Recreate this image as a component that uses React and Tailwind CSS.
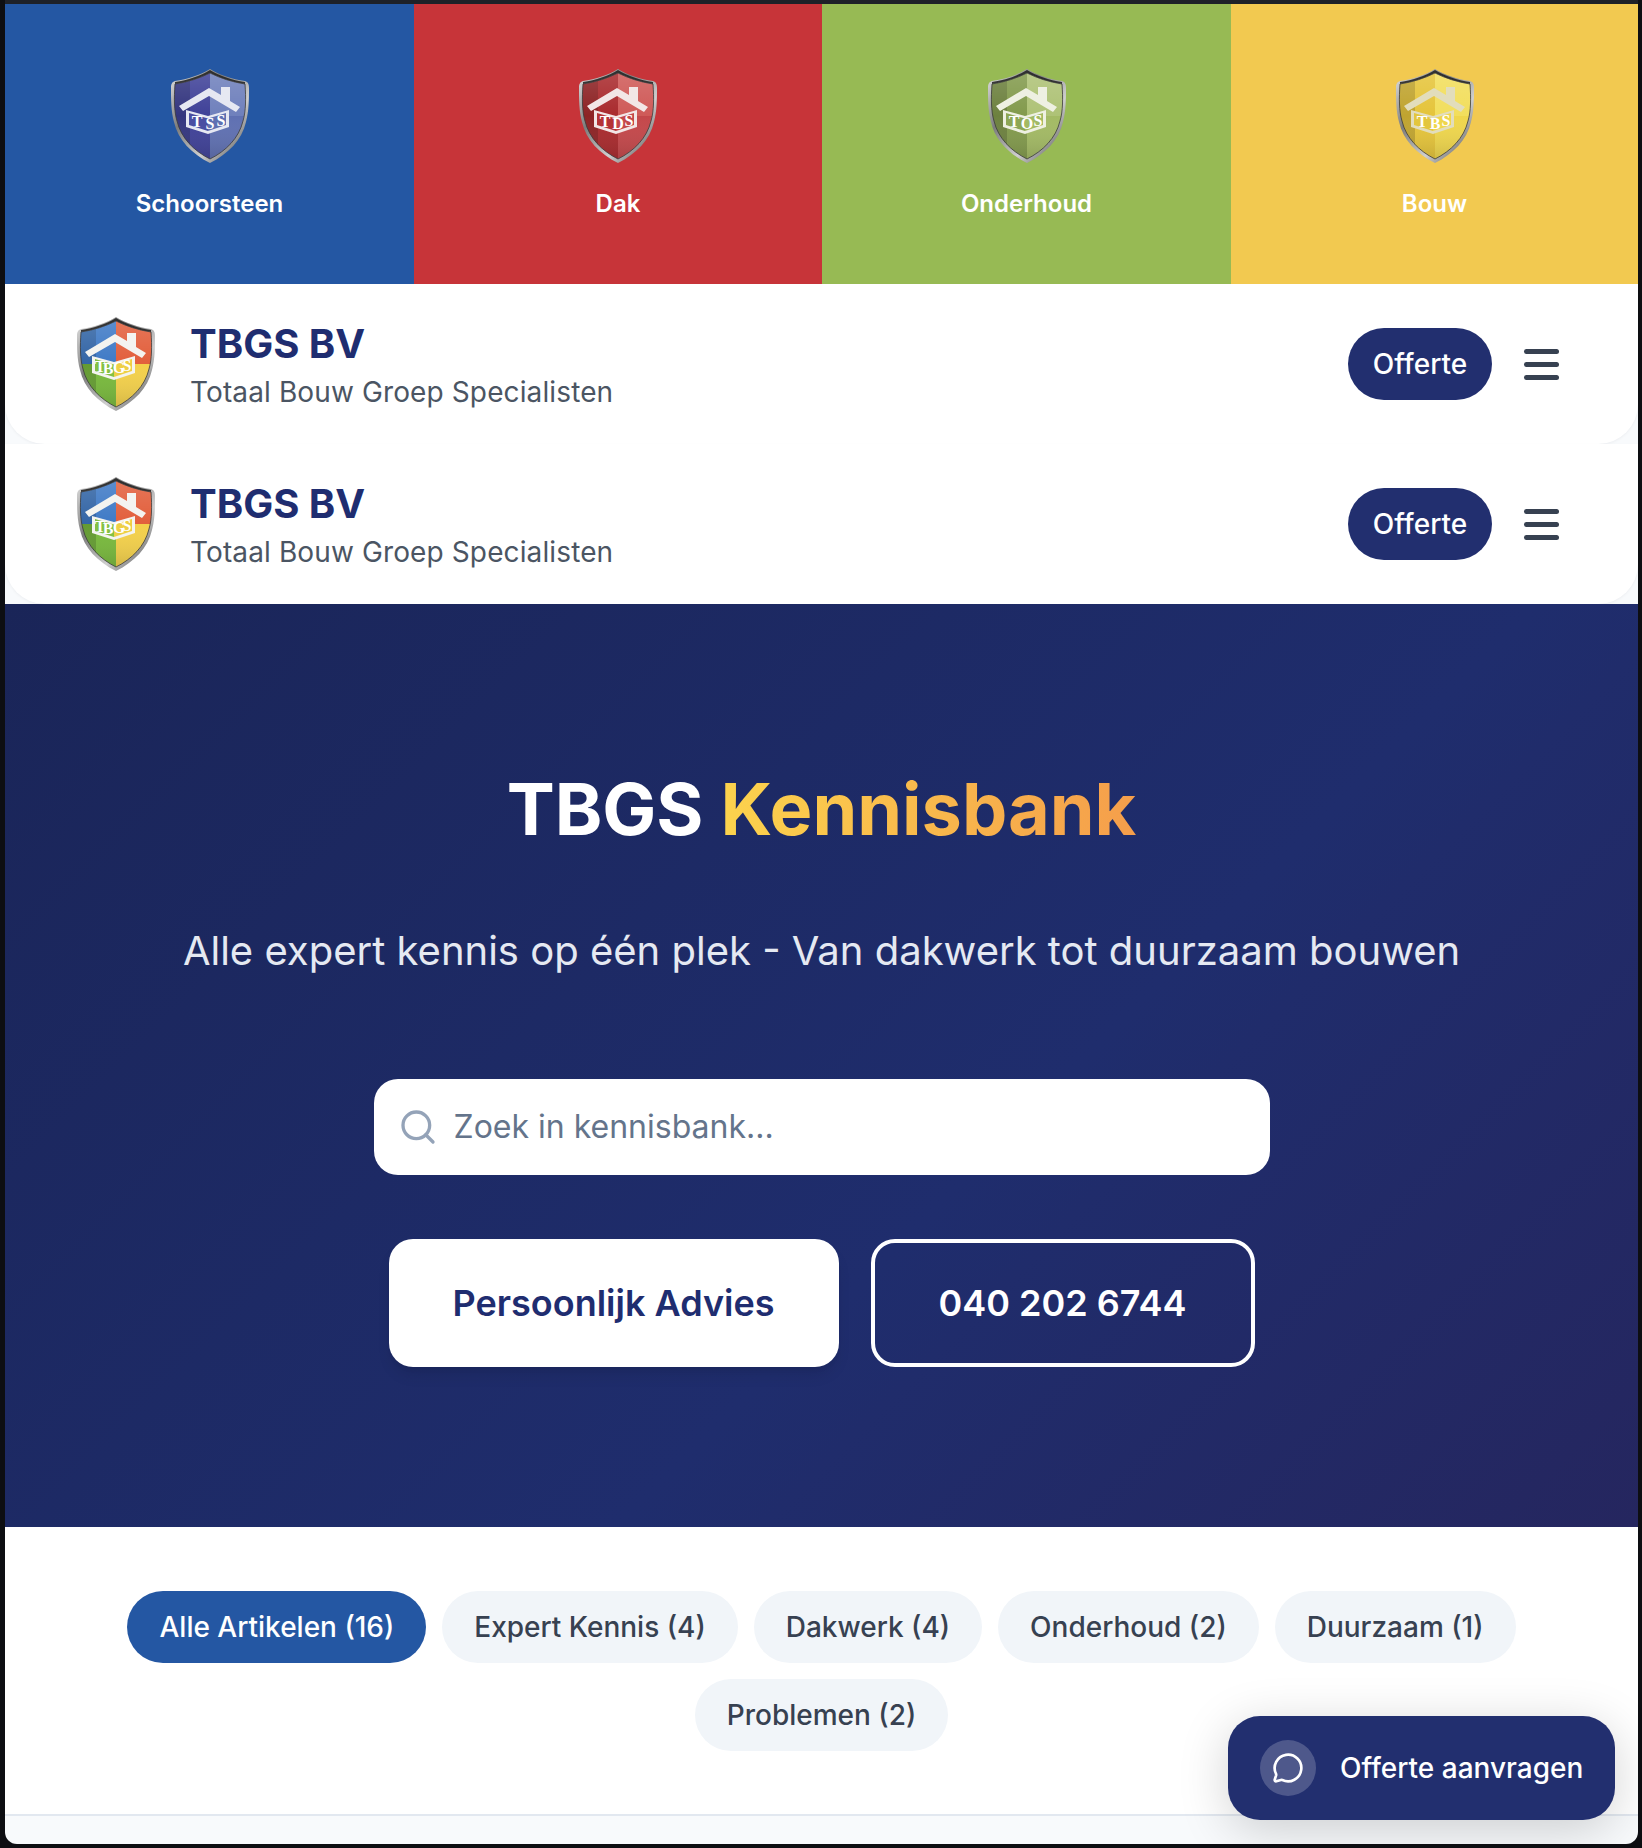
import { Search, MessageCircle } from "lucide-react";

const shieldOuter =
  "M40 1 C50 7 62 11 75 13 C78 14 79 16 79 20 C79 31 79 43 76 54 C72 72 58 86 40 95 C22 86 8 72 4 54 C1 43 1 31 1 20 C1 16 2 14 5 13 C18 11 30 7 40 1 Z";
const shieldInner =
  "M40 5 C50 10 62 14 75 16 C76 30 76 43 73 53 C69 70 56 83 40 91 C24 83 11 70 7 53 C4 43 4 30 5 16 C18 14 30 10 40 5 Z";

const Shield = ({ id, colors, letters, xs, ys, dy = 0 }) => (
  <svg width="80" height="96" viewBox="0 0 80 96" className="shrink-0">
    <defs>
      <linearGradient id={`rim-${id}`} x1="0" y1="0" x2="1" y2="1">
        <stop offset="0" stopColor="#e8e8e8" />
        <stop offset="0.35" stopColor="#7c7c7c" />
        <stop offset="0.65" stopColor="#cfcfcf" />
        <stop offset="1" stopColor="#3c3c3c" />
      </linearGradient>
      <linearGradient id={`sheen-${id}`} x1="0" y1="0" x2="0" y2="1">
        <stop offset="0" stopColor="#ffffff" stopOpacity="0.16" />
        <stop offset="0.5" stopColor="#ffffff" stopOpacity="0" />
        <stop offset="1" stopColor="#000000" stopOpacity="0.16" />
      </linearGradient>
      <clipPath id={`clip-${id}`}>
        <path d={shieldInner} />
      </clipPath>
    </defs>
    <path d={shieldOuter} fill={`url(#rim-${id})`} />
    <path d="M40 2 C50 8 62 12 75 14 L75 16 C62 14 50 10 40 5 C30 10 18 14 5 16 L5 14 C18 12 30 8 40 2 Z" fill="#1f1f1f" opacity="0.85" />
    <g clipPath={`url(#clip-${id})`}>
      <rect x="0" y="0" width="40" height="48" fill={colors.tl} />
      <rect x="40" y="0" width="40" height="48" fill={colors.tr} />
      <rect x="0" y="48" width="40" height="48" fill={colors.bl} />
      <rect x="40" y="48" width="40" height="48" fill={colors.br} />
      <rect x="0" y="0" width="20" height="96" fill="#000000" opacity="0.16" />
      <rect x="0" y="0" width="80" height="96" fill={`url(#sheen-${id})`} />
    </g>
    <path d={shieldInner} fill="none" stroke="#3a3a3a" strokeWidth="0.8" />
    <g transform={`translate(0 ${dy})`}>
      <path d="M9 36 L39 18 L51 25 V17 H60 V31 L70 37 L66 42 L39 26 L13 41 Z" fill={colors.house} />
      <path d="M16 40 L38 46 L59 40 V57 L38 64 L16 57 Z" fill={colors.house} />
      <path d="M19 43 L38 48.5 V61 L19 55 Z" fill={colors.windowLeft} />
      <path d="M38 48.5 L56 43 V55 L38 61 Z" fill={colors.windowRight} />
      <text
        x={xs}
        y={ys}
        textAnchor="middle"
        fontFamily="Liberation Serif, serif"
        fontWeight="700"
        fontSize="16"
        fill="#ffffff"
      >
        {letters}
      </text>
    </g>
  </svg>
);

const categories = [
  {
    name: "Schoorsteen",
    bg: "bg-[#2457a3]",
    letters: "TSS",
    colors: { tl: "#3f4198", tr: "#6f80bc", bl: "#3f4198", br: "#5f70b2", house: "#e6e8f2", windowLeft: "#4a4fa3", windowRight: "#5f70b2" },
  },
  {
    name: "Dak",
    bg: "bg-[#c73439]",
    letters: "TDS",
    colors: { tl: "#a92a2d", tr: "#cf5a58", bl: "#a92a2d", br: "#c4474a", house: "#f2e6e6", windowLeft: "#b53235", windowRight: "#c4474a" },
  },
  {
    name: "Onderhoud",
    bg: "bg-[#97ba54]",
    letters: "TOS",
    colors: { tl: "#829a4c", tr: "#aec276", bl: "#829a4c", br: "#a3ba64", house: "#eef0e2", windowLeft: "#8da655", windowRight: "#a3ba64" },
  },
  {
    name: "Bouw",
    bg: "bg-[#f2c950]",
    letters: "TBS",
    colors: { tl: "#e5c43a", tr: "#f2de5c", bl: "#e5c43a", br: "#efd64c", house: "#e2ddbc", windowLeft: "#e3c63d", windowRight: "#efd64c" },
  },
];

const brandColors = {
  tl: "#3f7ac6",
  tr: "#e25f3c",
  bl: "#78b93c",
  br: "#f3d04a",
  house: "#f4f4f0",
  windowLeft: "#84c043",
  windowRight: "#eecf45",
};

const filters = [
  "Alle Artikelen (16)",
  "Expert Kennis (4)",
  "Dakwerk (4)",
  "Onderhoud (2)",
  "Duurzaam (1)",
  "Problemen (2)",
];

const SiteHeader = ({ id }) => (
  <div className="h-40 bg-white rounded-b-[40px] shadow-[0_1px_3px_rgba(15,23,42,0.05)] flex items-center justify-between pl-[71px] pr-[79px]">
    <div className="flex items-center gap-[34px]">
      <Shield id={id} colors={brandColors} letters="TBGS" xs="24 32 43 51" ys="56 58 57 55" />
      <div className="pt-1">
        <div className="text-[40px] leading-[48px] font-bold text-[#1f2d70]">TBGS BV</div>
        <div className="text-[28px] leading-[40px] tracking-[0.12px] text-[#4b5563] mt-1">Totaal Bouw Groep Specialisten</div>
      </div>
    </div>
    <div className="flex items-center gap-8">
      <button className="h-[72px] w-36 rounded-full bg-[#222f6f] text-white text-[28px] font-medium">Offerte</button>
      <div className="flex flex-col gap-2 w-[35px]">
        <span className="h-[5px] rounded-full bg-[#374151]" />
        <span className="h-[5px] rounded-full bg-[#374151]" />
        <span className="h-[5px] rounded-full bg-[#374151]" />
      </div>
    </div>
  </div>
);

export default function App() {
  return (
    <div className="relative h-[1848px] overflow-hidden bg-[#0d0e12] pl-[5px] pr-1 pb-1 font-['Inter',sans-serif]">
      <div className="h-1 bg-[#1e2128]" />
      <div className="h-[1840px] bg-[#f8fafc] rounded-b-xl overflow-hidden">
        <div className="grid grid-cols-[409px_408px_409px_407px] h-[280px]">
          {categories.map((cat) => (
            <div key={cat.name} className={`${cat.bg} flex flex-col items-center pt-16`}>
              <Shield id={cat.name} colors={cat.colors} letters={cat.letters} xs="27 40 51" ys="57 59 56" dy={2} />
              <span className="mt-6 text-2xl font-semibold text-white">{cat.name}</span>
            </div>
          ))}
        </div>

        <SiteHeader id="one" />
        <SiteHeader id="two" />

        <section className="h-[923px] bg-[linear-gradient(135deg,#1a2558,#1f2d6d_60%,#25265f)] flex flex-col items-center pt-[165px]">
          <h1 className="text-[72px] leading-[80px] font-bold text-white">
            TBGS{" "}
            <span className="bg-[linear-gradient(90deg,#fcd34d,#f59e4b)] bg-clip-text text-transparent">Kennisbank</span>
          </h1>
          <p className="mt-[80px] text-[40px] leading-[44px] text-[#e5e9f2]">
            Alle expert kennis op één plek - Van dakwerk tot duurzaam bouwen
          </p>
          <div className="mt-[106px] w-[896px] h-24 bg-white rounded-3xl flex items-center pl-6 gap-4">
            <Search size={40} strokeWidth={2} className="text-[#94a3b8]" />
            <span className="text-[32px] text-[#64748b]">Zoek in kennisbank...</span>
          </div>
          <div className="mt-16 flex gap-8">
            <button className="w-[450px] h-32 rounded-3xl bg-white text-[#1f2d70] text-[36px] font-semibold shadow-lg">
              Persoonlijk Advies
            </button>
            <button className="w-[384px] h-32 rounded-3xl border-4 border-white text-white text-[36px] font-semibold">
              040 202 6744
            </button>
          </div>
        </section>

        <section className="h-[289px] bg-white border-b-2 border-[#e2e8f0] pt-16 px-8 flex flex-wrap justify-center content-start gap-4">
          {filters.map((f, i) => (
            <button
              key={f}
              className={`h-[72px] px-8 rounded-full text-[28px] font-medium ${i === 0 ? "bg-[#2457a3] text-white" : "bg-[#f1f5f9] text-[#374151]"}`}
            >
              {f}
            </button>
          ))}
        </section>
      </div>

      <div className="absolute left-[1228px] top-[1716px] w-[387px] h-[104px] rounded-[32px] bg-[#222f6f] shadow-[0_10px_50px_rgba(0,0,0,0.18)] flex items-center pl-8 gap-6 text-white">
        <span className="w-14 h-14 rounded-full bg-white/20 flex items-center justify-center">
          <MessageCircle size={32} strokeWidth={2} />
        </span>
        <span className="text-[28px] font-medium">Offerte aanvragen</span>
      </div>
    </div>
  );
}
